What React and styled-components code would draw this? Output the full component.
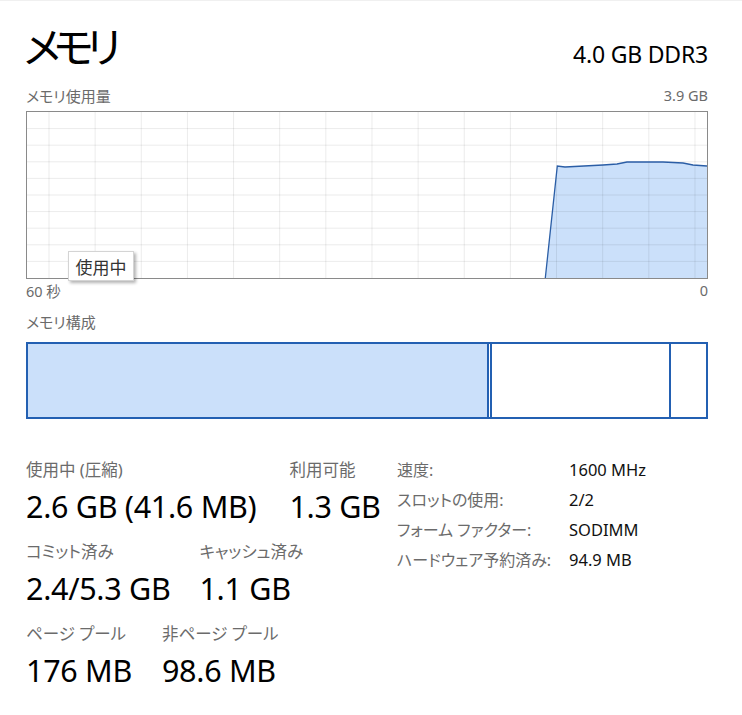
import React from "react";
import styled, { createGlobalStyle } from "styled-components";

const GlobalStyle = createGlobalStyle`
  html, body {
    margin: 0;
    padding: 0;
    background: #ffffff;
  }
  body {
    font-family: "Noto Sans", "Noto Sans CJK JP", sans-serif;
    font-feature-settings: "palt";
    color: #000;
  }
`;

const Page = styled.div`
  width: 742px;
  height: 715px;
  box-sizing: border-box;
  border-top: 1px solid #f0f0f0;
  padding: 0 34px 0 26px;
`;

const Header = styled.div`
  display: flex;
  justify-content: space-between;
  align-items: baseline;
  height: 78px;
`;

const Title = styled.h1`
  margin: 0 0 0 -2px;
  padding-top: 19px;
  font-size: 42px;
  font-weight: 400;
  line-height: 1.2;
  letter-spacing: -7px;
  font-family: "Noto Sans CJK JP", sans-serif;
`;

const Spec = styled.div`
  font-size: 23px;
  letter-spacing: -0.2px;
`;

const LabelRow = styled.div`
  display: flex;
  justify-content: space-between;
  align-items: center;
  height: ${(p) => p.h || "32px"};
  color: #6b6b6b;
  font-size: 15px;
`;

const Muted = styled.span`
  font-size: 14.5px;
  color: #6b6b6b;
`;

const GraphWrap = styled.div`
  position: relative;
  height: 168px;
  border: 1px solid #8a8a8a;
  box-sizing: border-box;
`;

const GraphSvg = styled.svg`
  display: block;
`;

const Tooltip = styled.div`
  position: absolute;
  left: 41px;
  top: 139px;
  width: 66px;
  height: 30px;
  box-sizing: border-box;
  background: #fff;
  border: 1px solid #d4d4d4;
  box-shadow: 2px 2px 3px rgba(0, 0, 0, 0.3);
  font-size: 17px;
  color: #333;
  display: flex;
  align-items: center;
  justify-content: center;
`;

const CompBar = styled.div`
  display: flex;
  height: 77px;
  border: 2px solid #2360b2;
  box-sizing: border-box;
`;

const Segment = styled.div`
  flex: ${(p) => p.flex};
  background: ${(p) => p.fill || "#fff"};
  border-left: ${(p) => (p.left ? "2px solid #2360b2" : "none")};
  border-right: ${(p) => (p.right ? "2px solid #2360b2" : "none")};
  margin-left: ${(p) => (p.gap ? "1px" : "0")};
`;

const Stats = styled.div`
  display: flex;
  margin-top: 39px;
`;

const StatsLeft = styled.div`
  width: 371px;
  display: flex;
  flex-direction: column;
  gap: 10px;
`;

const StatRow = styled.div`
  display: flex;
  gap: ${(p) => p.gap || "32px"};
`;

const Stat = styled.div`
  display: flex;
  flex-direction: column;
`;

const StatLabel = styled.div`
  font-size: 16.5px;
  color: #6b6b6b;
  height: 24px;
  line-height: 24px;
`;

const StatValue = styled.div`
  font-size: 30.5px;
  line-height: 48px;
  letter-spacing: -0.3px;
`;

const Details = styled.div`
  display: grid;
  grid-template-columns: 172px auto;
  grid-auto-rows: 30px;
  align-items: center;
  margin-top: -4px;
`;

const DetailLabel = styled.div`
  color: #6b6b6b;
  font-size: 16px;
`;

const DetailValue = styled.div`
  color: #111;
  font-size: 16.5px;
`;

const W = 680;
const H = 166;

const vLines = Array.from({ length: 15 }, (_, k) => 22 + 46.14 * k);
const hLines = Array.from({ length: 9 }, (_, k) => 16.6 * (k + 1));

const usage = [
  [518.3, H],
  [530.3, 54],
  [538, 55],
  [576, 53],
  [590, 52],
  [600, 50],
  [636, 50],
  [656, 51],
  [666, 53],
  [W, 54],
];

const UsageGraph = () => {
  const line = usage.map(([x, y]) => `${x},${y}`).join(" ");
  const area = `${line} ${W},${H}`;
  return (
    <GraphSvg width={W} height={H} viewBox={`0 0 ${W} ${H}`}>
      <polygon points={area} fill="#cbe0fa" />
      {vLines.map((x) => (
        <line key={"v" + x} x1={x} y1={0} x2={x} y2={H} stroke="rgba(0,0,0,0.08)" strokeWidth="1" />
      ))}
      {hLines.map((y) => (
        <line key={"h" + y} x1={0} y1={y} x2={W} y2={y} stroke="rgba(0,0,0,0.08)" strokeWidth="1" />
      ))}
      <polyline points={line} fill="none" stroke="#2b5ea6" strokeWidth="1.3" />
    </GraphSvg>
  );
};

const details = [
  ["速度:", "1600 MHz"],
  ["スロットの使用:", "2/2"],
  ["フォーム ファクター:", "SODIMM"],
  ["ハードウェア予約済み:", "94.9 MB"],
];

const App = () => {
  return (
    <>
      <GlobalStyle />
      <Page>
        <Header>
          <Title>メモリ</Title>
          <Spec>4.0 GB DDR3</Spec>
        </Header>

        <LabelRow>
          <span>メモリ使用量</span>
          <Muted>3.9 GB</Muted>
        </LabelRow>
        <GraphWrap>
          <UsageGraph />
          <Tooltip>使用中</Tooltip>
        </GraphWrap>
        <LabelRow h="22px">
          <Muted>60 秒</Muted>
          <Muted>0</Muted>
        </LabelRow>

        <LabelRow h="41px">
          <span>メモリ構成</span>
        </LabelRow>
        <CompBar>
          <Segment flex="0 0 459px" fill="#cbe0fa" right />
          <Segment flex="0 0 177px" left right gap />
          <Segment flex="1" />
        </CompBar>

        <Stats>
          <StatsLeft>
            <StatRow gap="33px">
              <Stat>
                <StatLabel>使用中 (圧縮)</StatLabel>
                <StatValue>2.6 GB (41.6 MB)</StatValue>
              </Stat>
              <Stat>
                <StatLabel>利用可能</StatLabel>
                <StatValue>1.3 GB</StatValue>
              </Stat>
            </StatRow>
            <StatRow gap="29px">
              <Stat>
                <StatLabel>コミット済み</StatLabel>
                <StatValue>2.4/5.3 GB</StatValue>
              </Stat>
              <Stat>
                <StatLabel>キャッシュ済み</StatLabel>
                <StatValue>1.1 GB</StatValue>
              </Stat>
            </StatRow>
            <StatRow gap="30px">
              <Stat>
                <StatLabel>ページ プール</StatLabel>
                <StatValue>176 MB</StatValue>
              </Stat>
              <Stat>
                <StatLabel>非ページ プール</StatLabel>
                <StatValue>98.6 MB</StatValue>
              </Stat>
            </StatRow>
          </StatsLeft>
          <Details>
            {details.map(([label, value]) => (
              <React.Fragment key={label}>
                <DetailLabel>{label}</DetailLabel>
                <DetailValue>{value}</DetailValue>
              </React.Fragment>
            ))}
          </Details>
        </Stats>
      </Page>
    </>
  );
};

export default App;
